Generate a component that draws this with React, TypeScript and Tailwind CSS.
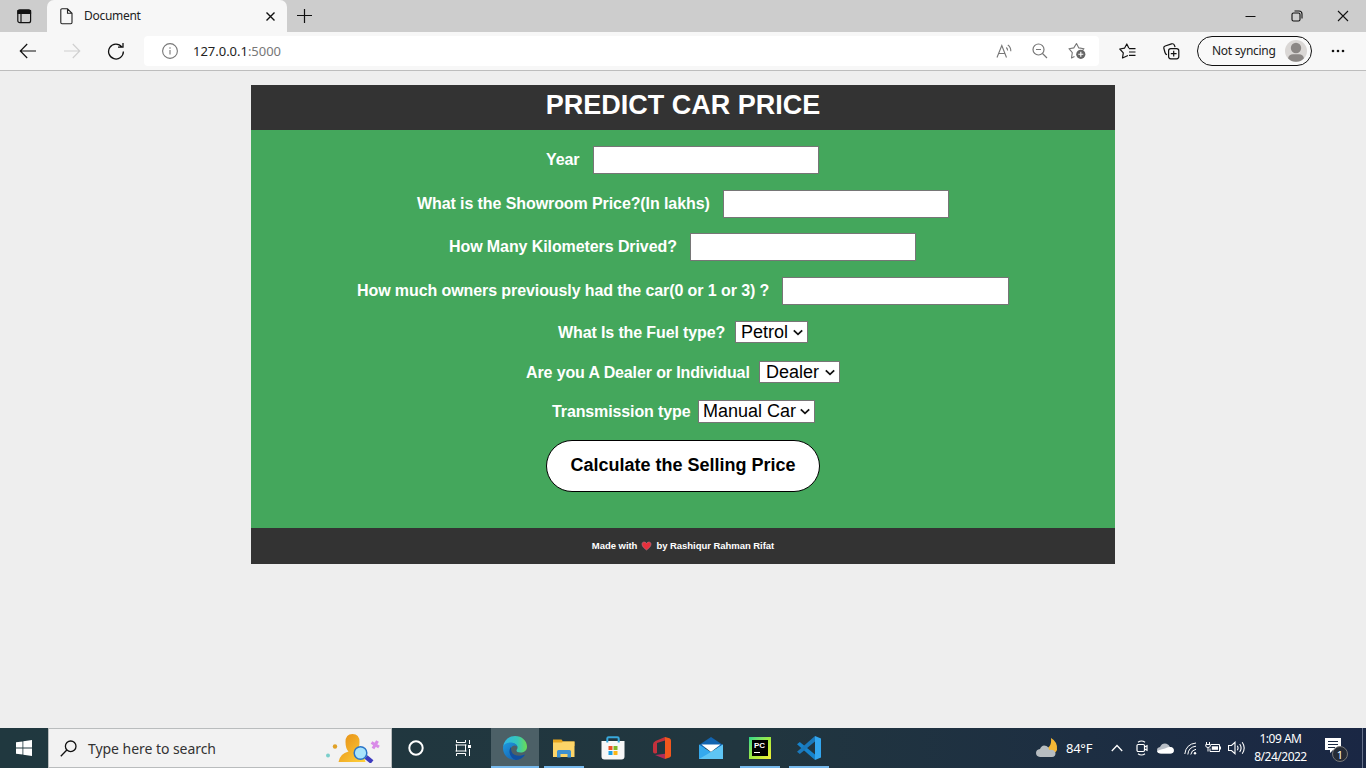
import React from "react";

type TextRow = { label: string; labelClass: string; fieldClass: string; rowClass: string };

const inputs: TextRow[] = [
  { label: "Year", rowClass: "mt-4 pl-[295px]", labelClass: "w-[47px]", fieldClass: "w-[226px]" },
  { label: "What is the Showroom Price?(In lakhs)", rowClass: "mt-4 pl-[166px]", labelClass: "w-[306px]", fieldClass: "w-[226px]" },
  { label: "How Many Kilometers Drived?", rowClass: "mt-[15px] pl-[198px]", labelClass: "w-[241px]", fieldClass: "w-[226px]" },
  { label: "How much owners previously had the car(0 or 1 or 3) ?", rowClass: "mt-4 pl-[106px]", labelClass: "w-[425px]", fieldClass: "w-[227px]" },
];

const selects = [
  { label: "What Is the Fuel type?", value: "Petrol", rowClass: "mt-4 h-[22px] pl-[307px]", labelClass: "w-[177px]", fieldClass: "w-[73px] pl-[5px]" },
  { label: "Are you A Dealer or Individual", value: "Dealer", rowClass: "mt-[18px] h-[22px] pl-[275px]", labelClass: "w-[233px]", fieldClass: "w-[81px] pl-[6px]" },
  { label: "Transmission type", value: "Manual Car", rowClass: "mt-[17px] h-[23px] pl-[301px]", labelClass: "w-[146px]", fieldClass: "w-[117px] pl-[4px]" },
];

function TabStrip() {
  return (
    <div className="flex h-8 bg-[#cdcdcd]">
      <div className="flex w-[47px] items-center pl-[17px]">
        <svg width="15" height="15" viewBox="0 0 15 15" fill="none" stroke="#111" strokeWidth="1.2">
          <rect x=".8" y=".9" width="12.8" height="12.8" rx="2" />
          <path d="M1 1.5h12.5v3H1z" fill="#111" />
          <path d="M4 5v8.5" />
        </svg>
      </div>
      <div className="flex w-[240px] items-center rounded-t-[7px] bg-[#f7f7f7] pl-[13px]">
        <svg width="13" height="17" viewBox="0 0 13 17" fill="none" stroke="#222" strokeWidth="1.1">
          <path d="M2 .8h5.5L12 5.3v9.2a1.2 1.2 0 0 1-1.2 1.2H2A1.2 1.2 0 0 1 .8 14.500V2A1.200 1.200 0 0 1 2 .8zM7.500 .8v4.500H12" />
        </svg>
        <span className="ml-[11px] w-[181px] text-[12px] leading-4 tracking-[-0.3px] text-[#222]">Document</span>
        <svg width="11" height="11" viewBox="0 0 11 11" stroke="#111" strokeWidth="1.4"><path d="M1.500 1.500l8 8M9.500 1.500l-8 8" /></svg>
      </div>
      <svg className="ml-[9px] mt-2" width="16" height="16" viewBox="0 0 16 16" stroke="#111" strokeWidth="1.2"><path d="M8.500 1v14M1 7.500h15" /></svg>
      <div className="ml-auto flex items-center pr-[17px]">
        <svg width="11" height="12" viewBox="0 0 11 12" stroke="#111"><path d="M.5 6.500h10" /></svg>
        <svg className="ml-[35px]" width="12" height="12" viewBox="0 0 12 12" fill="none" stroke="#111" strokeWidth="1.1">
          <rect x="1" y="3" width="8" height="8" rx="1.500" />
          <path d="M3.500 1H8a3 3 0 0 1 3 3v4.500" />
        </svg>
        <svg className="ml-[34px]" width="12" height="12" viewBox="0 0 12 12" stroke="#111" strokeWidth="1.100"><path d="M1 1l10 10M11 1L1 11" /></svg>
      </div>
    </div>
  );
}

function AddressBar() {
  return (
    <div className="flex h-[39px] items-center border-b border-[#bdbdbd] bg-[#f7f7f7]">
      <svg className="ml-[19px]" width="18" height="16" viewBox="0 0 18 16" fill="none" stroke="#111" strokeWidth="1.2"><path d="M17 8H1.500M8.200 1L1.300 8l6.900 7" /></svg>
      <svg className="ml-[26px]" width="18" height="16" viewBox="0 0 18 16" fill="none" stroke="#d0d0d0" strokeWidth="1.2"><path d="M1 8h15.500M9.800 1l6.900 7-6.900 7" /></svg>
      <svg className="ml-[26px]" width="18" height="18" viewBox="0 0 18 18" fill="none" stroke="#111" strokeWidth="1.3"><path d="M14.800 5A7.400 7.400 0 1 0 16.400 9.500M11 5.200h5V1" /></svg>
      <div className="ml-[19px] flex h-[30px] w-[955px] items-center rounded-[4px] bg-white pl-[18px]">
        <svg width="16" height="16" viewBox="0 0 16 16" fill="none" stroke="#777" strokeWidth="1.100"><circle cx="8" cy="8" r="7.400" /><path d="M8 7v4.500M8 4.300v1.400" /></svg>
        <span className="ml-[15px] text-[13px] leading-4 tracking-[-0.02px] text-[#222]">127.0.0.1<span className="text-[#777]">:5000</span></span>
        <svg className="ml-auto" width="16" height="15" viewBox="0 0 16 15" fill="none" stroke="#777" strokeWidth="1.100">
          <path d="M1 13.500L5.800 1.500l4.700 12M2.700 9.500h6.200M10.300 3.500q1.300 1.200 1.300 3M11.800 1q3.200 2.200 3 6.300" />
        </svg>
        <svg className="ml-5" width="16" height="16" viewBox="0 0 16 16" fill="none" stroke="#777" strokeWidth="1.2"><circle cx="6.500" cy="6.500" r="5.500" /><path d="M10.500 10.500l4.500 4.500M4 6.500h5" /></svg>
        <svg className="ml-5 mr-[13px]" width="18" height="18" viewBox="0 0 18 18" fill="none" stroke="#777" strokeWidth="1.100" strokeLinejoin="round">
          <path d="M6.500 14.500l-3 1.500.8-5.300L1 6.700l4.800-.8L8.500 1.500l2.300 4.400 5.200.8-1.600 1.800" />
          <circle cx="12.800" cy="12.300" r="4.600" fill="#666" stroke="none" /><path d="M12.800 9.800v5M10.300 12.300h5" stroke="#fff" />
        </svg>
      </div>
      <svg className="ml-5" width="17" height="16" viewBox="0 0 17 16" fill="none" stroke="#111" strokeWidth="1.200" strokeLinejoin="round"><path d="M9 12.500L3.500 15l.8-5.200L.8 6l4.700-.8L7.800 1l2.100 4.200M10 5.700h6.500M10 9h6.500M10 12.300h6.500" /></svg>
      <svg className="ml-[27px]" width="17" height="17" viewBox="0 0 17 17" fill="none" stroke="#111" strokeWidth="1.200">
        <rect x="5.600" y="5.600" width="10.200" height="10.200" rx="2.200" /><path d="M10.700 7.800v5.800M7.800 10.700h5.800M4 11.800Q2.500 11.300 2 9.500L.9 5.500Q.4 3.600 2.200 3L8.500.9q2.200-.6 2.900 1.300l.7 1.900" />
      </svg>
      <div className="ml-[17px] flex h-[30px] w-[115px] items-center rounded-full border border-[#111] bg-[#f9f9f9] pl-[14px]">
        <span className="w-[73px] whitespace-nowrap text-[12px] leading-4 tracking-[-0.3px] text-[#222]">Not syncing</span>
        <svg width="22" height="22" viewBox="0 0 22 22"><circle cx="11" cy="11" r="11" fill="#dad7d5" /><circle cx="11" cy="8" r="5.200" fill="#8b8785" /><path d="M3 18.300Q4 14.200 8 14.200h6q4 0 5 4.100Q15.800 21.800 11 21.800T3 18.300z" fill="#8b8785" /></svg>
      </div>
      <svg className="ml-[19px]" width="14" height="4" viewBox="0 0 14 4" fill="#111"><circle cx="2" cy="2" r="1.300" /><circle cx="7" cy="2" r="1.300" /><circle cx="12" cy="2" r="1.300" /></svg>
    </div>
  );
}

function Predictor() {
  return (
    <main className="ml-[251px] mt-[14px] flex h-[479px] w-[864px] flex-col bg-[#44a75c] font-['Liberation_Sans',Arial,sans-serif] font-bold text-white">
      <h1 className="h-[45px] bg-[#333] pt-[4px] text-center text-[27px] leading-[33px]">PREDICT CAR PRICE</h1>
      {inputs.map((r) => (
        <label key={r.label} className={`flex h-7 ${r.rowClass}`}>
          <span className={`shrink-0 whitespace-nowrap pt-[5px] text-[16px] leading-[18px] tracking-[-0.09px] ${r.labelClass}`}>{r.label}</span>
          <span className={`h-7 border border-[#767676] bg-white ${r.fieldClass}`} />
        </label>
      ))}
      {selects.map((r) => (
        <label key={r.label} className={`flex ${r.rowClass}`}>
          <span className={`shrink-0 whitespace-nowrap pt-[3px] text-[16px] leading-[18px] tracking-[-0.12px] ${r.labelClass}`}>{r.label}</span>
          <span className={`flex h-full items-start justify-between border border-[#767676] bg-white pr-[4px] text-[18px] font-normal leading-5 text-black ${r.fieldClass}`}>
            <span className="whitespace-nowrap">{r.value}</span>
            <svg className="mt-[7px]" width="10" height="7" viewBox="0 0 10 7" fill="none" stroke="#111" strokeWidth="1.800"><path d="M.8 1.300L5 5.300l4.200-4" /></svg>
          </span>
        </label>
      ))}
      <button className="ml-[295px] mt-[17px] h-[52px] w-[274px] rounded-full border border-black bg-white pb-[2px] text-[18px] font-bold text-black">Calculate the Selling Price</button>
      <footer className="mt-auto flex h-9 items-center justify-center whitespace-nowrap bg-[#333] text-[9.500px] tracking-[-0.04px]">
        <span>Made with</span>
        <svg className="mx-1" width="11" height="10" viewBox="0 0 11 10"><path d="M5.500 9C3.500 7.500 1 5.500 1 3.200 1 .5 4.300.4 5.500 2.500 6.700.4 10 .5 10 3.200 10 5.500 7.500 7.500 5.500 9z" fill="#e8303c" stroke="#b78" strokeWidth=".6" /></svg>
        <span>by Rashiqur Rahman Rifat</span>
      </footer>
    </main>
  );
}

function SearchArt() {
  return (
    <svg width="56" height="30" viewBox="0 0 56 30">
      <defs><linearGradient id="person" x1="0" y1="0" x2="1" y2="1"><stop stopColor="#e58b14" /><stop offset="1" stopColor="#ffd23b" /></linearGradient></defs>
      <circle cx="3" cy="22.500" r="2" fill="#7bcfcb" /><circle cx="10" cy="13.500" r="2.200" fill="#e0a126" />
      <path d="M13.500 29Q15 20.500 23.500 18.500q-3-3-3-9.500 0-8 7-8t7 8q0 6.500-3 9.500 8 2.500 9 10.500z" fill="url(#person)" />
      <path d="M41 24l6 5" stroke="#3d3bbf" strokeWidth="4.500" />
      <circle cx="35.500" cy="20" r="6.300" fill="#a8e4fb" stroke="#2a75c8" strokeWidth="1.500" />
      <path d="M46.500 9.500l7.500 4.500M52.500 8l-4.500 7.500" stroke="#d98be8" strokeWidth="3.200" />
    </svg>
  );
}

function AppTile({ children, state = "" }: { children: React.ReactNode; state?: "" | "open" | "active" }) {
  return (
    <div className={`flex h-10 w-12 shrink-0 flex-col items-center ${state === "active" ? "bg-[#4c6067]" : ""}`}>
      <div className="flex h-[38px] items-center pt-[2px]">{children}</div>
      <div className={`h-[2px] ${state === "active" ? "w-full bg-[#76b9ed]" : state === "open" ? "w-10 bg-[#76b9ed]" : "w-0"}`} />
    </div>
  );
}

function Taskbar() {
  return (
    <footer className="mt-auto flex h-10 bg-linear-to-r from-[#20383f] via-[#21363f] via-55% to-[#1a2744] text-white">
      <div className="flex w-12 items-center justify-center">
        <svg width="16" height="16" viewBox="0 0 16 16" fill="#fff"><path d="M0 2.300L6.500 1.400v6.200H0zM7.300 1.300L16 0v7.600H7.300zM0 8.400h6.500v6.200L0 13.700zM7.300 8.400H16V16l-8.700-1.300z" /></svg>
      </div>
      <div className="flex w-[344px] items-center border border-[#b9bcbd] bg-[#f2f2f2] pl-[11px]">
        <svg width="17" height="17" viewBox="0 0 17 17" fill="none" stroke="#111" strokeWidth="1.300"><circle cx="10.700" cy="6.300" r="5.300" /><path d="M6.800 10L.8 16.200" /></svg>
        <span className="ml-[11px] w-[237px] whitespace-nowrap pt-px text-[14px] leading-5 tracking-[-0.05px] text-[#333]">Type here to search</span>
        <SearchArt />
      </div>
      <div className="flex w-[99px]">
        <AppTile><svg width="16" height="16" viewBox="0 0 16 16" fill="none" stroke="#fff" strokeWidth="2"><circle cx="8" cy="8" r="6.700" /></svg></AppTile>
        <AppTile>
          <svg className="mr-[2px]" width="17" height="16" viewBox="0 0 17 16" fill="none" stroke="#fff"><path d="M1.500 0v2.500h9V0M1.500 16v-2.500h9V16M.5 5h11M.5 11h11M1.500 4.500v7M10.500 4.500v7M14.500 0v4M14.500 9v7" /><path d="M13 5h3v3h-3z" fill="#fff" stroke="none" /></svg>
        </AppTile>
      </div>
      <div className="flex gap-px">
        <AppTile state="active">
          <svg width="24" height="24" viewBox="0 0 24 24">
            <defs>
              <linearGradient id="edgeTop" x1="0" x2="1"><stop stopColor="#2eb4e8" /><stop offset=".6" stopColor="#36c6ba" /><stop offset="1" stopColor="#6bdc52" /></linearGradient>
              <linearGradient id="edgeLow" x1="0" x2="1" y1="0" y2="1"><stop stopColor="#1f9ade" /><stop offset="1" stopColor="#1053a8" /></linearGradient>
            </defs>
            <path d="M0 11C1 4 6 0 12 0c7 0 12 5 12 10.500 0 4-3 6-6.500 6-3 0-4-1-4-2s1-1.300 1-3C14.500 8.500 11 7 8 7 4 7 1 9 0 11z" fill="url(#edgeTop)" />
            <path d="M0 12C0 8.500 3.500 6.500 7.500 6.500c4 0 7 2.300 7 5-.4-1.300-1.600-2-3-2-2.500 0-4 2.200-4 5C7.500 18.500 12 20 16 20c3 0 5-1.200 6-1.700-2 3.600-6 5.700-10 5.700C5.500 24 0 19 0 12z" fill="url(#edgeLow)" />
            <path d="M8 11c-1 1-1.800 3-1.500 5.500C7 20 9.500 23 13 24c4-.3 7.500-2.500 9-5.500-5 2.500-12 1.500-13.500-3-.5-1.500-.5-3-.5-4.500z" fill="#124f9f" />
          </svg>
        </AppTile>
        <AppTile state="open">
          <svg width="22" height="19" viewBox="0 0 22 19"><path d="M0 .5h8.500l1.500 2H21.500V7H0z" fill="#e7a51e" /><path d="M0 3.500h9l1-1h11.500V18H0z" fill="#fdd568" /><path d="M4 18.500V12.500Q4 11 5.500 11h11q1.500 0 1.500 1.500v6h-3.500V15h-7v3.500z" fill="#3e91d1" /></svg>
        </AppTile>
        <AppTile>
          <svg width="24" height="24" viewBox="0 0 24 24"><path d="M.5 5h23v15.500a3 3 0 0 1-3 3h-17a3 3 0 0 1-3-3z" fill="#f7f7f7" /><path d="M6.300 6.500V2.500q0-1.300 1.300-1.300h8.800q1.300 0 1.300 1.300v4" fill="none" stroke="#38a9dc" strokeWidth="2" /><path d="M7.500 10h4v4h-4z" fill="#ef5025" /><path d="M12.500 10h4v4h-4z" fill="#7fb928" /><path d="M7.500 15h4v4h-4z" fill="#1ba0e4" /><path d="M12.500 15h4v4h-4z" fill="#fcb615" /></svg>
        </AppTile>
        <AppTile>
          <svg width="18" height="22" viewBox="0 0 18 22"><path d="M12 0L2.500 4Q0 5 0 7.500v7Q0 17 2.500 16.500L4 16V6l8-2.500z" fill="#c4313c" /><path d="M12 0l4.500 1.300Q18 2 18 3.500v15q0 1.500-1.500 2L12 22z" fill="#f2571d" /><path d="M2 18l10-1.300V22z" fill="#b32b58" /></svg>
        </AppTile>
        <AppTile>
          <svg width="24" height="23" viewBox="0 0 24 23"><path d="M0 8L12 0l12 8v3H0z" fill="#1264b0" /><path d="M2.500 7.500h19L12 15z" fill="#fff" /><path d="M0 7.500l12 7.800 12-7.800V22H0z" fill="#35a9ed" /><path d="M0 22l12-7 12-7.500V22z" fill="#5fc5f4" /></svg>
        </AppTile>
        <AppTile state="open">
          <span className="flex h-[22px] w-[22px] bg-linear-to-br from-[#21d789] via-[#9cea3f] to-[#f6ee35] p-[3px]">
            <span className="flex w-4 flex-col bg-black pl-[2px] pt-[2px] font-['Liberation_Sans'] text-[8px] font-bold leading-[8px]">PC<span className="mt-[2px] h-px w-[6px] bg-white" /></span>
          </span>
        </AppTile>
        <AppTile state="open">
          <svg width="24" height="24" viewBox="0 0 24 24"><path d="M0 8.300L2.800 6 18 18.500V24z" fill="#1683cc" /><path d="M0 15.700L2.800 18 18 5.500V0z" fill="#1b79bb" /><path d="M18 0l6 2.500v19L18 24z" fill="#32a6ef" /></svg>
        </AppTile>
      </div>
      <div className="ml-auto flex items-center pr-[3px]">
        <svg width="22" height="20" viewBox="0 0 22 20"><path d="M15 0q7 4 6 12-2 5-9 4-5-2-5-5 9 0 8-11z" fill="#f5b735" /><path d="M4 19q-4-.5-4-4t4-4q2-5 6.500-3 2.500 1 2.700 4 5-1 6.300 3 0 4-3.500 4z" fill="#b7bdc1" /></svg>
        <span className="ml-[8px] w-[45px] whitespace-nowrap text-[13px] leading-5 tracking-[-0.25px]">84°F</span>
        <svg width="12" height="8" viewBox="0 0 12 8" fill="none" stroke="#fff" strokeWidth="1.300"><path d="M.8 7L6 1.500 11.200 7" /></svg>
        <svg className="ml-[13px]" width="12" height="16" viewBox="0 0 12 16" fill="none" stroke="#fff" strokeWidth="1.200"><path d="M2 2.300Q5.500-.3 9 2.300M2 13.700q3.500 2.600 7 0" /><rect x="1" y="4.500" width="7.500" height="7" rx="1.200" /><path d="M8.500 7l2.500-1.300v4.600L8.500 9" /></svg>
        <svg className="ml-[9px]" width="17" height="11" viewBox="0 0 17 11"><path d="M4 10.500Q0 10.500 0 7.300 0 4.500 3 4 5-.2 9.500.8 12 1.500 13 4q3.800.3 3.800 3.500T13 10.500z" fill="#b9bfc7" /><path d="M4 10.500Q.5 10.500.2 8 4 6.300 8 5.500q3-2 5-1.500 3.800.3 3.800 3.500T13 10.500z" fill="#fff" /></svg>
        <svg className="ml-[10px]" width="13" height="13" viewBox="0 0 13 13" fill="none" stroke="#fff"><path d="M.8 12Q2 2 12 1M3.800 12.500Q4.500 5 12 4.200M6.800 12.500Q7.500 8 12 7.300" /><circle cx="11" cy="11.300" r="1.200" fill="#fff" stroke="none" /></svg>
        <svg className="ml-[8px]" width="17" height="12" viewBox="0 0 17 12" fill="none" stroke="#fff"><path d="M6 2.500h8.500v7H5V6.500M15.500 4.500v3M1.500 0v2.500M4.500 0v2.500M.8 2.500h4.500V4Q5 5.500 3 5.500T.8 4zM3 5.500v4" /><path d="M6.800 4.300h6.200v3.500H6.800z" fill="#fff" stroke="none" /></svg>
        <svg className="ml-[6px]" width="18" height="14" viewBox="0 0 18 14" fill="none" stroke="#fff" strokeWidth="1.100"><path d="M.5 4.500h3L7 1.300v11.400L3.500 9.500h-3zM9.300 4.700q1.500 2.300 0 4.600M11.700 3q2.800 4 0 8M14.200 1.300q4 5.700 0 11.400" /></svg>
        <div className="ml-[2px] w-[65px] whitespace-nowrap pb-[1px] text-center text-[12px] leading-[18px] tracking-[-0.5px]"><div>1:09 AM</div><div>8/24/2022</div></div>
        <div className="relative ml-[12px] h-6 w-[25px]">
          <svg width="17" height="18" viewBox="0 0 17 18"><path d="M0 2h16v12H8l-3 3v-3H0z" fill="#fff" /><path d="M3 5.500h10M3 8.500h10M3 11.500h7" stroke="#1b2942" /></svg>
          <span className="absolute left-[7px] top-[10px] flex h-[16px] w-[16px] items-center justify-center rounded-full border border-[#777] bg-[#252b36] text-[11px] leading-none">1</span>
        </div>
        <span className="ml-[12px] h-10 w-px bg-[#66718a]" />
      </div>
    </footer>
  );
}

export default function App() {
  return (
    <div className="flex h-[768px] w-[1366px] flex-col overflow-hidden bg-[#eee] font-['Noto_Sans','Open_Sans',sans-serif]">
      <TabStrip />
      <AddressBar />
      <Predictor />
      <Taskbar />
    </div>
  );
}
